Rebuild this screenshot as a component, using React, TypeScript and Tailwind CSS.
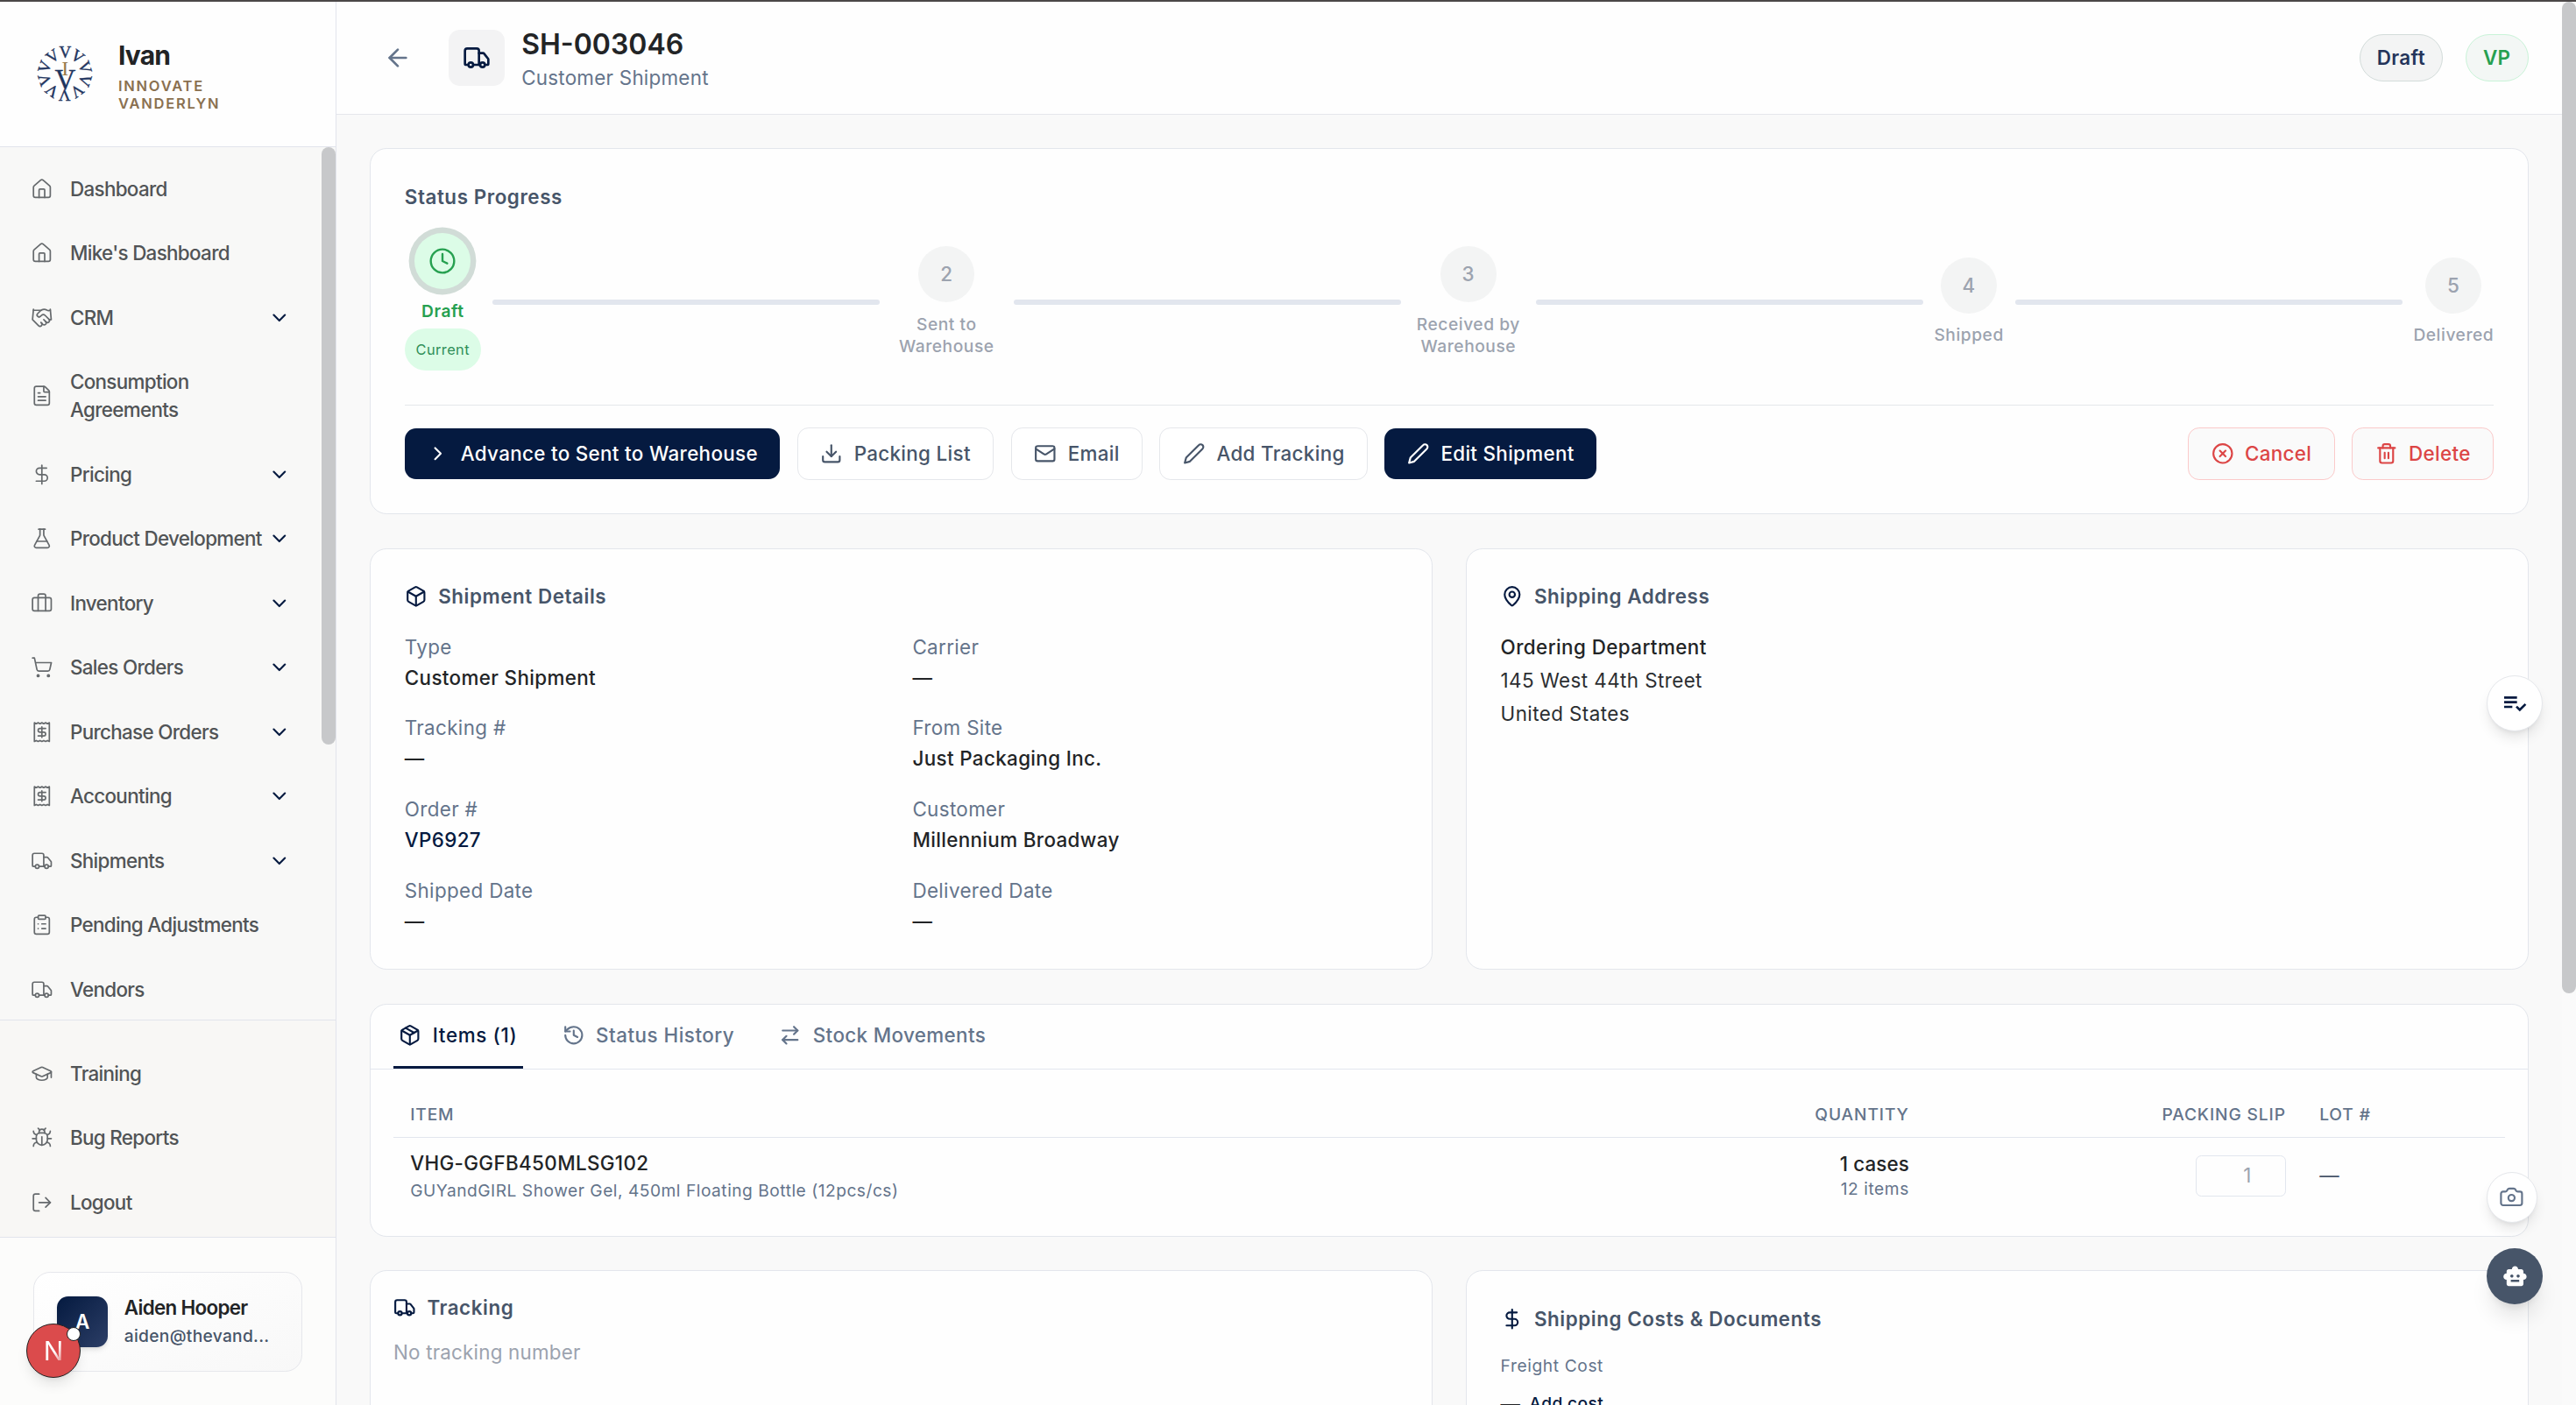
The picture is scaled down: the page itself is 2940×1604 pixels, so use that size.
import React from 'react';
import {
    ArrowLeft, ArrowRightLeft, Briefcase, Bug, Camera, ChevronDown, ChevronRight, CircleX, ClipboardList, Clock,
    DollarSign, Download, FileText, FlaskConical, GraduationCap, Handshake, History, House, LogOut, Mail, MapPin,
    Box, Package, Receipt, ShoppingCart, Trash2, Truck, LucideIcon,
} from 'lucide-react';
import { MdPlaylistAddCheck, MdSmartToy } from 'react-icons/md';

interface NavItem {
    label: string;
    icon: LucideIcon;
    expandable?: boolean;
}

const NAV_ITEMS: NavItem[] = [
    { label: 'Dashboard', icon: House },
    { label: "Mike's Dashboard", icon: House },
    { label: 'CRM', icon: Handshake, expandable: true },
    { label: 'Consumption Agreements', icon: FileText },
    { label: 'Pricing', icon: DollarSign, expandable: true },
    { label: 'Product Development', icon: FlaskConical, expandable: true },
    { label: 'Inventory', icon: Briefcase, expandable: true },
    { label: 'Sales Orders', icon: ShoppingCart, expandable: true },
    { label: 'Purchase Orders', icon: Receipt, expandable: true },
    { label: 'Accounting', icon: Receipt, expandable: true },
    { label: 'Shipments', icon: Truck, expandable: true },
    { label: 'Pending Adjustments', icon: ClipboardList },
    { label: 'Vendors', icon: Truck },
];

const FOOTER_ITEMS: NavItem[] = [
    { label: 'Training', icon: GraduationCap },
    { label: 'Bug Reports', icon: Bug },
    { label: 'Logout', icon: LogOut },
];

const STEPS = ['Draft', 'Sent to Warehouse', 'Received by Warehouse', 'Shipped', 'Delivered'];

const DETAILS = [
    { label: 'Type', value: 'Customer Shipment' },
    { label: 'Carrier', value: '—' },
    { label: 'Tracking #', value: '—' },
    { label: 'From Site', value: 'Just Packaging Inc.' },
    { label: 'Order #', value: 'VP6927', link: true },
    { label: 'Customer', value: 'Millennium Broadway' },
    { label: 'Shipped Date', value: '—' },
    { label: 'Delivered Date', value: '—' },
];

// Plain pencil outline, without the ferrule line
const PencilIcon: React.FC<{ className?: string }> = ({ className }) => (
    <svg viewBox="0 0 24 24" className={className} fill="none" stroke="currentColor" strokeWidth={2} strokeLinecap="round" strokeLinejoin="round">
        <path d="M17 3a2.83 2.83 0 1 1 4 4L7.5 20.5 2 22l1.5-5.5Z" />
    </svg>
);

const Logo: React.FC = () => (
    <svg viewBox="-32 -32 64 64" className="size-10 shrink-0" fontFamily="Liberation Serif, serif" textAnchor="middle">
        {[0, 36, 72, 108, 144, 180, 216, 252, 288, 324].map(deg => (
            <text key={deg} transform={`rotate(${deg})`} y={-18} fontSize={19} fill="#1f355f" stroke="#1f355f" strokeWidth={0.4}>V</text>
        ))}
        <text y={18} fontSize={33} fill="#1f355f" stroke="#1f355f" strokeWidth={0.3}>V</text>
        <text y={2} fontSize={24} fill="#9a7a4c">I</text>
    </svg>
);

const NavRow: React.FC<{ item: NavItem }> = ({ item }) => {
    const Icon = item.icon;
    return (
        <a className="flex items-center gap-3 px-2.5 py-[20.75px] text-sm font-medium text-[#515456]">
            <Icon className="size-4 shrink-0 text-[#666a6d]" strokeWidth={1.6} />
            <span className={item.expandable ? 'flex-1 whitespace-nowrap' : 'flex-1 pr-4'}>{item.label}</span>
            {item.expandable && <ChevronDown className="-ml-3 size-4 shrink-0 text-[#051a40]" strokeWidth={2} />}
        </a>
    );
};

const Sidebar: React.FC = () => (
    <aside className="flex w-[384px] shrink-0 flex-col border-r border-[#e2e4ec] bg-[#f8f8f7] tracking-[-0.67px]">
        <div className="flex h-[166px] shrink-0 gap-[29px] border-b border-[#e2e4ec] bg-[#fefefe] pt-[50px] pl-[42px]">
            <Logo />
            <div className="-mt-[8px]">
                <div className="text-[30px] leading-[38px] font-bold tracking-[-0.9px] text-[#222426]">Ivan</div>
                <div className="mt-[6px] w-[130px] text-[16.5px] leading-[20px] font-semibold tracking-[1.75px] text-[#8a7050]">INNOVATE VANDERLYN</div>
            </div>
        </div>
        <div className="flex min-h-0 flex-1">
            <nav className="flex-1 overflow-hidden px-3 pt-[10.8px]">
                {NAV_ITEMS.map(item => <NavRow key={item.label} item={item} />)}
            </nav>
            <div className="h-[682px] w-[16px] shrink-0 rounded-full bg-[#c7c8ca]" />
        </div>
        <div className="h-[248px] shrink-0 border-t border-[#e2e4ec] bg-[#f8f7f5] pt-[24px] pr-[35px] pl-3">
            {FOOTER_ITEMS.map(item => <NavRow key={item.label} item={item} />)}
        </div>
        <div className="relative h-[192px] shrink-0 border-t border-[#e2e4ec] bg-[#fcfcfb] px-6 pt-[39px]">
            <div className="flex h-[114px] items-center gap-3 rounded-xl border border-[#e6e7ec] bg-gradient-to-br from-white to-[#f8f8f8] px-4">
                <div className="flex size-9 shrink-0 items-center justify-center rounded-lg bg-gradient-to-br from-[#051a40] to-[#2c3e66] text-sm font-semibold text-white shadow-md">A</div>
                <div className="-mt-[3px]">
                    <div className="text-sm leading-[32px] font-semibold text-[#222426]">Aiden Hooper</div>
                    <div className="mt-[4px] text-xs font-medium tracking-[0.3px] text-[#475569]">aiden@thevand...</div>
                </div>
            </div>
            <div className="absolute top-[98px] left-[30px] flex size-[62px] items-center justify-center rounded-full border-[1.5px] border-[#222] bg-[#db4b4c] shadow-lg">
                <span className="bg-gradient-to-br from-white from-55% to-white/20 bg-clip-text text-[30px] leading-none font-normal tracking-normal text-transparent">N</span>
                <span className="absolute top-[3px] right-[-1px] size-[16px] rounded-full border-[1.5px] border-[#222] bg-white" />
            </div>
        </div>
    </aside>
);

const Header: React.FC = () => (
    <header className="flex h-[129px] shrink-0 items-center border-b border-[#e5e7eb] bg-[#fefefe] px-6">
        <button className="flex size-10 items-center justify-center text-[#64748b]"><ArrowLeft className="size-5" /></button>
        <div className="ml-4 flex size-10 items-center justify-center rounded-lg bg-[#f3f3f4] text-[#051a40]"><Truck className="size-5" /></div>
        <div className="ml-3 flex-1 pt-[2px]">
            <h1 className="text-xl font-semibold tracking-normal text-[#222426]">SH-003046</h1>
            <p className="text-sm tracking-[0.25px] text-[#64748b]">Customer Shipment</p>
        </div>
        <span className="rounded-full border border-[#d3dcda] bg-[#f3f4f4] px-3 py-[9.6px] text-sm font-semibold text-[#24345a]">Draft</span>
        <span className="ml-4 rounded-full border border-[#c9f3d8] bg-[#f3f7f5] px-3 py-[9.6px] text-sm font-semibold text-[#26a050]">VP</span>
    </header>
);

const Card: React.FC<{ className?: string; children: React.ReactNode }> = ({ className = '', children }) => (
    <section className={`rounded-xl border border-[#e3e6ec] bg-[#fefefe] ${className}`}>{children}</section>
);

const CardTitle: React.FC<{ icon?: LucideIcon; children: React.ReactNode }> = ({ icon: Icon, children }) => (
    <h2 className="flex items-center gap-2 text-sm font-semibold tracking-[0.56px] text-[#475569]">
        {Icon && <Icon className="size-4 text-[#051a40]" />}
        <span>{children}</span>
    </h2>
);

const buttonStyles = {
    primary: 'bg-[#051a40] text-white',
    outline: 'border border-[#e5e7eb] bg-white text-[#475569]',
    danger: 'border border-[#fbcaca] bg-[#fafafa] text-[#dc4545]',
};

const ActionButton: React.FC<{ icon: React.ElementType; variant: keyof typeof buttonStyles; children: React.ReactNode }> = ({ icon: Icon, variant, children }) => (
    <button className={`flex items-center gap-2 rounded-lg px-4 py-2 text-sm font-medium tracking-[0.32px] ${buttonStyles[variant]}`}>
        <Icon className="size-4" />
        <span>{children}</span>
    </button>
);

const StatusProgress: React.FC = () => (
    <Card className="p-6">
        <CardTitle>Status Progress</CardTitle>
        <div className="mt-4 flex items-center">
            {STEPS.map((step, i) => (
                <React.Fragment key={step}>
                    {i > 0 && <div className="mx-2 h-1 flex-1 rounded-full bg-[#e2e6ee]" />}
                    <div className="flex max-w-20 flex-col items-center text-center tracking-[0.55px]">
                        {i === 0 ? (
                            <div className="flex size-10 items-center justify-center rounded-full bg-[#dcfce7] text-[#26a050] ring-[6.4px] ring-[#d1dcd7]"><Clock className="size-5" strokeWidth={1.8} /></div>
                        ) : (
                            <div className="flex size-10 items-center justify-center rounded-full bg-[#f3f4f4] text-sm font-medium text-[#9ca3af]">{i + 1}</div>
                        )}
                        <span className={i === 0 ? 'mt-2 text-xs font-semibold text-[#26a050]' : 'mt-2 text-xs font-medium text-[#9ca3af]'}>{step}</span>
                        {i === 0 && <span className="mt-1 flex h-[48px] items-center rounded-full bg-[#dcfce7] px-2 text-[16.4px] tracking-[0.4px] text-[#2f8f58]">Current</span>}
                    </div>
                </React.Fragment>
            ))}
        </div>
        <div className="mt-6 flex items-center gap-3 border-t border-[#e5e7eb] pt-4">
            <ActionButton icon={ChevronRight} variant="primary">Advance to Sent to Warehouse</ActionButton>
            <ActionButton icon={Download} variant="outline">Packing List</ActionButton>
            <ActionButton icon={Mail} variant="outline">Email</ActionButton>
            <ActionButton icon={PencilIcon} variant="outline">Add Tracking</ActionButton>
            <ActionButton icon={PencilIcon} variant="primary">Edit Shipment</ActionButton>
            <div className="flex-1" />
            <ActionButton icon={CircleX} variant="danger">Cancel</ActionButton>
            <ActionButton icon={Trash2} variant="danger">Delete</ActionButton>
        </div>
    </Card>
);

const ItemsCard: React.FC = () => (
    <Card>
        <div className="flex gap-6 border-b border-[#e2e6ee] px-4 text-sm font-medium text-[#64748b]">
            <div className="flex items-center gap-2 border-b-[3.2px] border-[#051a40] px-1 py-3 tracking-[0.65px] text-[#051a40]"><Package className="size-4" /><span>Items (1)</span></div>
            <div className="flex items-center gap-2 border-b-[3.2px] border-transparent px-1 py-3 tracking-[0.5px]"><History className="size-4" /><span>Status History</span></div>
            <div className="flex items-center gap-2 border-b-[3.2px] border-transparent px-1 py-3"><ArrowRightLeft className="size-4" /><span>Stock Movements</span></div>
        </div>
        <div className="p-4">
            <div className="grid grid-cols-[1fr_430px_430px_231px] border-b border-[#e2e6ee] text-xs font-medium tracking-[0.045em] text-[#64748b]">
                <div className="px-3 py-2">ITEM</div>
                <div className="px-3 py-2 text-right">QUANTITY</div>
                <div className="px-3 py-2 text-right">PACKING SLIP</div>
                <div className="px-3 py-2">LOT #</div>
            </div>
            <div className="grid grid-cols-[1fr_430px_430px_231px] items-center text-sm">
                <div className="px-3 py-2">
                    <div className="font-medium text-[#222426]">VHG-GGFB450MLSG102</div>
                    <div className="mt-0.5 text-xs tracking-[0.5px] text-[#64748b]">GUYandGIRL Shower Gel, 450ml Floating Bottle (12pcs/cs)</div>
                </div>
                <div className="px-3 text-right">
                    <div className="font-medium tracking-[0.1px] text-[#222426]">1 cases</div>
                    <div className="text-xs tracking-[0.55px] text-[#64748b]">12 items</div>
                </div>
                <div className="flex justify-end px-3">
                    <div className="w-16 rounded-[6.4px] border border-[#e2e6ee] py-[6.4px] pr-[38px] text-right text-[#9ca3af]">1</div>
                </div>
                <div className="px-3 text-[#475569]">—</div>
            </div>
        </div>
    </Card>
);

const ShipmentDetailPage: React.FC = () => (
    <div className="flex flex-1 flex-col gap-6 overflow-hidden bg-[#f9f9f9] p-6">
        <StatusProgress />
        <div className="grid grid-cols-2 gap-6">
            <Card className="p-6">
                <CardTitle icon={Box}>Shipment Details</CardTitle>
                <div className="mt-4 grid grid-cols-2 gap-4 text-sm">
                    {DETAILS.map(d => (
                        <div key={d.label}>
                            <div className="text-[#64748b]">{d.label}</div>
                            <div className={d.link ? 'mt-0.5 font-medium text-[#051a40]' : 'mt-0.5 font-medium text-[#222426]'}>{d.value}</div>
                        </div>
                    ))}
                </div>
            </Card>
            <Card className="p-6">
                <CardTitle icon={MapPin}>Shipping Address</CardTitle>
                <div className="mt-4 space-y-1 text-sm tracking-[0.42px] text-[#2b2e31]">
                    <div className="font-medium text-[#222426]">Ordering Department</div>
                    <div>145 West 44th Street</div>
                    <div>United States</div>
                </div>
            </Card>
        </div>
        <ItemsCard />
        <div className="grid h-[260px] shrink-0 grid-cols-2 gap-6">
            <Card className="p-4">
                <CardTitle icon={Truck}>Tracking</CardTitle>
                <p className="mt-3 text-sm tracking-[0.2px] text-[#9ca3af]">No tracking number</p>
            </Card>
            <Card className="p-6">
                <CardTitle icon={DollarSign}>Shipping Costs &amp; Documents</CardTitle>
                <div className="mt-4 text-xs tracking-[0.6px] text-[#64748b]">Freight Cost</div>
                <div className="mt-[14px] flex items-center gap-[10px] text-sm font-medium text-[#222426]">
                    <span>—</span>
                    <span className="text-xs text-[#051a40]">Add cost</span>
                </div>
            </Card>
        </div>
    </div>
);

const App: React.FC = () => (
    <div className="relative flex h-[1604px] w-[2940px] overflow-hidden border-t-2 border-[#4b4747] font-['Inter',sans-serif] [font-optical-sizing:none] [--radius-lg:12.8px] [--radius-xl:19.2px] [--spacing:6.4px] [--text-sm:22.4px] [--text-xl:32px] [--text-xs:19.2px]">
        <Sidebar />
        <main className="flex min-w-0 flex-1 flex-col tracking-[0.36px]">
            <Header />
            <ShipmentDetailPage />
        </main>
        <div className="w-[16px] shrink-0 bg-[#fafafa]"><div className="h-[1132px] rounded-full bg-[#c7c8ca]" /></div>

        {/* Floating actions */}
        <button className="absolute top-[769px] left-[2838px] flex size-10 items-center justify-center rounded-full border border-[#e5e7eb] bg-white text-[#051a40] shadow-lg"><MdPlaylistAddCheck className="size-[32px]" /></button>
        <button className="absolute top-[1336px] left-[2838px] flex size-9 items-center justify-center rounded-full border border-[#e5e7eb] bg-white text-[#64748b] shadow-lg"><Camera className="size-[28.8px]" strokeWidth={1.8} /></button>
        <button className="absolute top-[1423px] left-[2838px] flex size-10 items-center justify-center rounded-full bg-[#475569] text-white shadow-xl"><MdSmartToy className="size-[28.8px]" /></button>
    </div>
);

export default App;
